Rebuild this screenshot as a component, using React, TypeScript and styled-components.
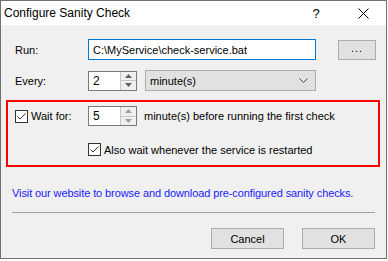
import React from "react";
import styled, { createGlobalStyle } from "styled-components";

const GlobalStyle = createGlobalStyle`
  html, body {
    margin: 0;
    padding: 0;
    background: #ffffff;
  }
  body {
    font-family: "Liberation Sans", Arial, sans-serif;
    font-size: 11px;
    color: #000;
    white-space: nowrap;
  }
`;

const Window = styled.div`
  width: 385px;
  height: 257px;
  border: 1px solid #707070;
  background: #f0f0f0;
  display: flex;
  flex-direction: column;
`;

const TitleBar = styled.div`
  height: 24px;
  background: #ffffff;
  display: flex;
  align-items: center;
  padding-left: 3px;
`;

const Title = styled.span`
  flex: 1;
  font-size: 12px;
  padding-bottom: 1px;
`;

const HelpGlyph = styled.span`
  width: 46px;
  text-align: center;
  font-size: 13px;
  margin-right: 1px;
`;

const CloseBox = styled.span`
  width: 46px;
  height: 24px;
  display: flex;
  align-items: center;
  justify-content: center;
`;

const Body = styled.div`
  flex: 1;
  display: flex;
  flex-direction: column;
  padding: 14px 11px 0 11px;
`;

const FieldRow = styled.div<{ $top?: number }>`
  display: flex;
  align-items: center;
  padding-left: 3px;
  margin-top: ${(p) => p.$top ?? 0}px;
`;

const Label = styled.span`
  width: 73px;
  flex: none;
`;

const TextInput = styled.div<{ $width: number; $focused?: boolean }>`
  box-sizing: border-box;
  width: ${(p) => p.$width}px;
  height: 21px;
  background: #fff;
  border: 1px solid ${(p) => (p.$focused ? "#0078d7" : "#7a7a7a")};
  padding-left: 4px;
  display: flex;
  align-items: center;
`;

const PushButton = styled.div<{ $width: number }>`
  box-sizing: border-box;
  width: ${(p) => p.$width}px;
  height: 20px;
  background: #e1e1e1;
  border: 1px solid #adadad;
  display: flex;
  align-items: center;
  justify-content: center;
`;

const BrowseButton = styled(PushButton)`
  margin-left: auto;
  margin-right: -1px;
  letter-spacing: 1px;
  padding-bottom: 3px;
`;

const Spin = styled.div`
  box-sizing: border-box;
  width: 49px;
  height: 20px;
  display: flex;
  border: 1px solid #7a7a7a;
  background: #fff;
  flex: none;
`;

const SpinValue = styled.div`
  flex: 1;
  display: flex;
  align-items: center;
  padding-left: 4px;
  font-size: 12px;
`;

const SpinArrows = styled.div`
  width: 15px;
  display: flex;
  flex-direction: column;
  border-left: 1px solid #c8c8c8;
`;

const SpinArrow = styled.div<{ $up?: boolean }>`
  flex: 1;
  background: #f0f0f0;
  display: flex;
  align-items: center;
  justify-content: center;
  border-top: ${(p) => (p.$up ? "none" : "1px solid #c8c8c8")};
`;

const Combo = styled.div`
  box-sizing: border-box;
  width: 171px;
  height: 21px;
  margin-left: 8px;
  background: #e1e1e1;
  border: 1px solid #adadad;
  display: flex;
  align-items: center;
  padding: 0 7px 0 4px;
`;

const ComboText = styled.span`
  flex: 1;
`;

const Highlight = styled.div`
  margin: 9px -5px 0 -6px;
  height: 67px;
  box-sizing: border-box;
  border: 2px solid #ff0000;
  padding: 4px 0 0 4px;
  display: flex;
  flex-direction: column;
`;

const CheckLabel = styled.label`
  display: flex;
  align-items: center;
  gap: 3px;
`;

const WaitCheck = styled(CheckLabel)`
  width: 73px;
  flex: none;
`;

const SubRow = styled.div`
  display: flex;
  padding-left: 76px;
  margin-top: 17px;
`;

const Suffix = styled.span`
  margin-left: 7px;
`;

const Link = styled.a`
  margin-top: 19px;
  color: #1a1aff;
  text-decoration: none;
  line-height: 15px;
  letter-spacing: -0.1px;
  cursor: pointer;
`;

const Separator = styled.hr`
  margin: 11px 0 0 0;
  border: none;
  border-top: 1px solid #a0a0a0;
  height: 0;
`;

const ButtonRow = styled.div`
  display: flex;
  justify-content: flex-end;
  gap: 18px;
  margin-top: 15px;
`;

const DialogButton = styled(PushButton)`
  height: 21px;
`;

const CheckBox = () => (
  <svg width="13" height="13" viewBox="0 0 13 13">
    <rect x="0.5" y="0.5" width="12" height="12" fill="#fff" stroke="#333" />
    <polyline points="2.5,6.5 5,9 10.5,3.5" fill="none" stroke="#333" strokeWidth="1" />
  </svg>
);

const Triangle = ({ up, color }: { up?: boolean; color: string }) => (
  <svg width="7" height="4" viewBox="0 0 7 4">
    <polygon points={up ? "0,4 7,4 3.5,0" : "0,0 7,0 3.5,4"} fill={color} />
  </svg>
);

const SpinBox = ({ value, dim }: { value: string; dim?: boolean }) => {
  const color = dim ? "#a0a0a0" : "#606060";
  return (
    <Spin>
      <SpinValue>{value}</SpinValue>
      <SpinArrows>
        <SpinArrow $up>
          <Triangle up color={color} />
        </SpinArrow>
        <SpinArrow>
          <Triangle color={color} />
        </SpinArrow>
      </SpinArrows>
    </Spin>
  );
};

export default function App() {
  return (
    <>
      <GlobalStyle />
      <Window>
        <TitleBar>
          <Title>Configure Sanity Check</Title>
          <HelpGlyph>?</HelpGlyph>
          <CloseBox>
            <svg width="11" height="11" viewBox="0 0 11 11">
              <path d="M0.5 0.5 L10.5 10.5 M10.5 0.5 L0.5 10.5" stroke="#000" strokeWidth="1" />
            </svg>
          </CloseBox>
        </TitleBar>
        <Body>
          <FieldRow>
            <Label>Run:</Label>
            <TextInput $width={228} $focused>
              C:\MyService\check-service.bat
            </TextInput>
            <BrowseButton $width={38}>...</BrowseButton>
          </FieldRow>
          <FieldRow $top={10}>
            <Label>Every:</Label>
            <SpinBox value="2" />
            <Combo>
              <ComboText>minute(s)</ComboText>
              <svg width="9" height="5" viewBox="0 0 9 5">
                <polyline points="0.5,0.5 4.5,4.5 8.5,0.5" fill="none" stroke="#404040" />
              </svg>
            </Combo>
          </FieldRow>
          <Highlight>
            <FieldRow>
              <WaitCheck>
                <CheckBox />
                Wait for:
              </WaitCheck>
              <SpinBox value="5" dim />
              <Suffix>minute(s) before running the first check</Suffix>
            </FieldRow>
            <SubRow>
              <CheckLabel>
                <CheckBox />
                Also wait whenever the service is restarted
              </CheckLabel>
            </SubRow>
          </Highlight>
          <Link>Visit our website to browse and download pre-configured sanity checks.</Link>
          <Separator />
          <ButtonRow>
            <DialogButton $width={73}>Cancel</DialogButton>
            <DialogButton $width={73}>OK</DialogButton>
          </ButtonRow>
        </Body>
      </Window>
    </>
  );
}
